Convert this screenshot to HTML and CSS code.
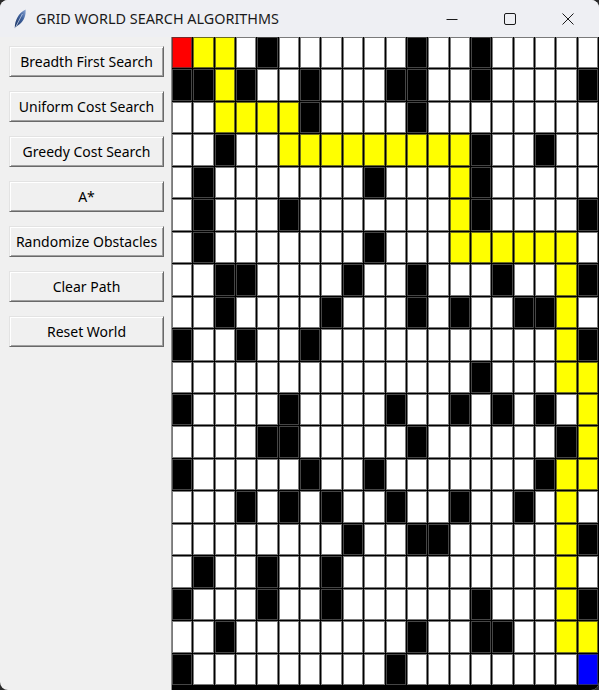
FILE: index.html
```html
<!DOCTYPE html>
<html lang="en">
<head>
<meta charset="utf-8">
<title>GRID WORLD SEARCH ALGORITHMS</title>
<link rel="stylesheet" href="styles.css">
</head>
<body>
<div class="window">
  <header class="titlebar">
    <svg class="feather" viewBox="0 0 12 20" width="12" height="20" aria-hidden="true">
      <defs>
        <linearGradient id="fg" x1="0" y1="1" x2="1" y2="0">
          <stop offset="0" stop-color="#1d3563"/>
          <stop offset="0.6" stop-color="#3f629e"/>
          <stop offset="1" stop-color="#8fa9d6"/>
        </linearGradient>
      </defs>
      <path d="M0.8 19 C0.8 11 4.6 4 11.6 0.4 C12.2 7 9.6 13 3.4 16.8 Z" fill="url(#fg)"/>
      <path d="M0.9 19.6 L8.4 5" stroke="#d6e0f0" stroke-width="0.7" fill="none"/>
    </svg>
    <span class="title">GRID WORLD SEARCH ALGORITHMS</span>
    <div class="caption">
      <span class="cap"><svg width="12" height="12" viewBox="0 0 12 12"><path d="M0.5 6.5 H11.5" stroke="#1a1a1a" stroke-width="1"/></svg></span>
      <span class="cap"><svg width="12" height="12" viewBox="0 0 12 12"><rect x="0.5" y="0.5" width="11" height="11" rx="1.5" fill="none" stroke="#1a1a1a" stroke-width="1"/></svg></span>
      <span class="cap"><svg width="12" height="12" viewBox="0 0 12 12"><path d="M0.5 0.5 L11.5 11.5 M11.5 0.5 L0.5 11.5" stroke="#1a1a1a" stroke-width="1"/></svg></span>
    </div>
  </header>
  <div class="main">
    <aside class="sidebar">
      <button class="btn">Breadth First Search</button>
      <button class="btn">Uniform Cost Search</button>
      <button class="btn">Greedy Cost Search</button>
      <button class="btn">A*</button>
      <button class="btn">Randomize Obstacles</button>
      <button class="btn">Clear Path</button>
      <button class="btn">Reset World</button>
    </aside>
    <div class="grid">
<div class="c s"></div><div class="c y"></div><div class="c y"></div><div class="c"></div><div class="c k"></div><div class="c"></div><div class="c"></div><div class="c"></div><div class="c"></div><div class="c"></div><div class="c"></div><div class="c k"></div><div class="c"></div><div class="c"></div><div class="c k"></div><div class="c"></div><div class="c"></div><div class="c"></div><div class="c"></div><div class="c"></div>
<div class="c k"></div><div class="c k"></div><div class="c y"></div><div class="c k"></div><div class="c"></div><div class="c"></div><div class="c k"></div><div class="c"></div><div class="c"></div><div class="c"></div><div class="c k"></div><div class="c k"></div><div class="c"></div><div class="c"></div><div class="c k"></div><div class="c"></div><div class="c"></div><div class="c"></div><div class="c"></div><div class="c k"></div>
<div class="c"></div><div class="c"></div><div class="c y"></div><div class="c y"></div><div class="c y"></div><div class="c y"></div><div class="c k"></div><div class="c"></div><div class="c"></div><div class="c"></div><div class="c"></div><div class="c k"></div><div class="c"></div><div class="c"></div><div class="c"></div><div class="c"></div><div class="c"></div><div class="c"></div><div class="c"></div><div class="c"></div>
<div class="c"></div><div class="c"></div><div class="c k"></div><div class="c"></div><div class="c"></div><div class="c y"></div><div class="c y"></div><div class="c y"></div><div class="c y"></div><div class="c y"></div><div class="c y"></div><div class="c y"></div><div class="c y"></div><div class="c y"></div><div class="c k"></div><div class="c"></div><div class="c"></div><div class="c k"></div><div class="c"></div><div class="c"></div>
<div class="c"></div><div class="c k"></div><div class="c"></div><div class="c"></div><div class="c"></div><div class="c"></div><div class="c"></div><div class="c"></div><div class="c"></div><div class="c k"></div><div class="c"></div><div class="c"></div><div class="c"></div><div class="c y"></div><div class="c k"></div><div class="c"></div><div class="c"></div><div class="c"></div><div class="c"></div><div class="c"></div>
<div class="c"></div><div class="c k"></div><div class="c"></div><div class="c"></div><div class="c"></div><div class="c k"></div><div class="c"></div><div class="c"></div><div class="c"></div><div class="c"></div><div class="c"></div><div class="c"></div><div class="c"></div><div class="c y"></div><div class="c k"></div><div class="c"></div><div class="c"></div><div class="c"></div><div class="c"></div><div class="c k"></div>
<div class="c"></div><div class="c k"></div><div class="c"></div><div class="c"></div><div class="c"></div><div class="c"></div><div class="c"></div><div class="c"></div><div class="c"></div><div class="c k"></div><div class="c"></div><div class="c"></div><div class="c"></div><div class="c y"></div><div class="c y"></div><div class="c y"></div><div class="c y"></div><div class="c y"></div><div class="c y"></div><div class="c"></div>
<div class="c"></div><div class="c"></div><div class="c k"></div><div class="c k"></div><div class="c"></div><div class="c"></div><div class="c"></div><div class="c"></div><div class="c k"></div><div class="c"></div><div class="c"></div><div class="c k"></div><div class="c"></div><div class="c"></div><div class="c"></div><div class="c k"></div><div class="c"></div><div class="c"></div><div class="c y"></div><div class="c k"></div>
<div class="c"></div><div class="c"></div><div class="c k"></div><div class="c"></div><div class="c"></div><div class="c"></div><div class="c"></div><div class="c k"></div><div class="c"></div><div class="c"></div><div class="c"></div><div class="c k"></div><div class="c"></div><div class="c k"></div><div class="c"></div><div class="c"></div><div class="c k"></div><div class="c k"></div><div class="c y"></div><div class="c"></div>
<div class="c k"></div><div class="c"></div><div class="c"></div><div class="c k"></div><div class="c"></div><div class="c"></div><div class="c k"></div><div class="c"></div><div class="c"></div><div class="c"></div><div class="c"></div><div class="c"></div><div class="c"></div><div class="c"></div><div class="c"></div><div class="c"></div><div class="c"></div><div class="c"></div><div class="c y"></div><div class="c k"></div>
<div class="c"></div><div class="c"></div><div class="c"></div><div class="c"></div><div class="c"></div><div class="c"></div><div class="c"></div><div class="c"></div><div class="c"></div><div class="c"></div><div class="c"></div><div class="c"></div><div class="c"></div><div class="c"></div><div class="c k"></div><div class="c"></div><div class="c"></div><div class="c"></div><div class="c y"></div><div class="c y"></div>
<div class="c k"></div><div class="c"></div><div class="c"></div><div class="c"></div><div class="c"></div><div class="c k"></div><div class="c"></div><div class="c"></div><div class="c"></div><div class="c"></div><div class="c k"></div><div class="c"></div><div class="c"></div><div class="c k"></div><div class="c"></div><div class="c k"></div><div class="c"></div><div class="c k"></div><div class="c"></div><div class="c y"></div>
<div class="c"></div><div class="c"></div><div class="c"></div><div class="c"></div><div class="c k"></div><div class="c k"></div><div class="c"></div><div class="c"></div><div class="c"></div><div class="c"></div><div class="c"></div><div class="c k"></div><div class="c"></div><div class="c"></div><div class="c"></div><div class="c"></div><div class="c"></div><div class="c"></div><div class="c k"></div><div class="c y"></div>
<div class="c k"></div><div class="c"></div><div class="c"></div><div class="c"></div><div class="c"></div><div class="c"></div><div class="c k"></div><div class="c"></div><div class="c"></div><div class="c k"></div><div class="c"></div><div class="c"></div><div class="c"></div><div class="c"></div><div class="c"></div><div class="c"></div><div class="c"></div><div class="c k"></div><div class="c y"></div><div class="c y"></div>
<div class="c"></div><div class="c"></div><div class="c"></div><div class="c k"></div><div class="c"></div><div class="c k"></div><div class="c"></div><div class="c k"></div><div class="c"></div><div class="c"></div><div class="c k"></div><div class="c"></div><div class="c"></div><div class="c k"></div><div class="c"></div><div class="c"></div><div class="c k"></div><div class="c"></div><div class="c y"></div><div class="c"></div>
<div class="c"></div><div class="c"></div><div class="c"></div><div class="c"></div><div class="c"></div><div class="c"></div><div class="c"></div><div class="c"></div><div class="c k"></div><div class="c"></div><div class="c"></div><div class="c k"></div><div class="c k"></div><div class="c"></div><div class="c"></div><div class="c"></div><div class="c"></div><div class="c"></div><div class="c y"></div><div class="c k"></div>
<div class="c"></div><div class="c k"></div><div class="c"></div><div class="c"></div><div class="c k"></div><div class="c"></div><div class="c"></div><div class="c k"></div><div class="c"></div><div class="c"></div><div class="c"></div><div class="c"></div><div class="c"></div><div class="c"></div><div class="c"></div><div class="c"></div><div class="c"></div><div class="c"></div><div class="c y"></div><div class="c"></div>
<div class="c k"></div><div class="c"></div><div class="c"></div><div class="c"></div><div class="c k"></div><div class="c"></div><div class="c"></div><div class="c k"></div><div class="c"></div><div class="c"></div><div class="c"></div><div class="c"></div><div class="c"></div><div class="c"></div><div class="c k"></div><div class="c"></div><div class="c"></div><div class="c"></div><div class="c y"></div><div class="c k"></div>
<div class="c"></div><div class="c"></div><div class="c k"></div><div class="c"></div><div class="c"></div><div class="c"></div><div class="c"></div><div class="c"></div><div class="c"></div><div class="c"></div><div class="c"></div><div class="c k"></div><div class="c"></div><div class="c"></div><div class="c k"></div><div class="c k"></div><div class="c"></div><div class="c"></div><div class="c y"></div><div class="c y"></div>
<div class="c k"></div><div class="c"></div><div class="c"></div><div class="c"></div><div class="c"></div><div class="c"></div><div class="c"></div><div class="c"></div><div class="c"></div><div class="c"></div><div class="c k"></div><div class="c"></div><div class="c"></div><div class="c"></div><div class="c"></div><div class="c"></div><div class="c"></div><div class="c"></div><div class="c"></div><div class="c g"></div>
    </div>
  </div>
</div>
</body>
</html>
```
FILE: styles.css
```css
html, body {
  margin: 0;
  padding: 0;
}

body {
  width: 599px;
  height: 690px;
  overflow: hidden;
  background: #2a2a2a;
}

.window {
  width: 599px;
  height: 690px;
  border-radius: 8px;
  overflow: hidden;
  background: #f0f0f0;
  display: flex;
  flex-direction: column;
}

.titlebar {
  height: 37px;
  flex: none;
  background: #eeeff3;
  display: flex;
  align-items: center;
}

.feather {
  flex: none;
  margin-left: 14px;
  margin-right: 10px;
}

.title {
  flex: 1;
  font-family: "Noto Sans", sans-serif;
  font-size: 14.4px;
  color: #1a1a1a;
  white-space: nowrap;
}

.caption {
  display: flex;
  align-self: stretch;
  padding-right: 2px;
}

.cap {
  width: 58px;
  display: flex;
  align-items: center;
  justify-content: center;
}

.main {
  flex: 1;
  display: flex;
  min-height: 0;
}

.sidebar {
  width: 171px;
  flex: none;
  box-sizing: border-box;
  padding: 9px 0 0 9px;
  display: flex;
  flex-direction: column;
  align-items: flex-start;
  gap: 14px;
}

.btn {
  box-sizing: border-box;
  width: 155px;
  height: 31px;
  margin: 0;
  padding: 0;
  background: #f0f0f0;
  color: #000;
  font-family: "Noto Sans", sans-serif;
  font-size: 14px;
  border: 1px solid;
  border-color: #e3e3e3 #696969 #696969 #e3e3e3;
  box-shadow: inset 1px 1px #ffffff, inset -1px -1px #a0a0a0;
}

.grid {
  flex: 1;
  display: grid;
  grid-template-columns: repeat(20, 1fr);
  grid-template-rows: repeat(20, 1fr);
  gap: 1px;
  padding: 0 1px 5px 0;
  background: #000;
  border-left: 1px solid #8c8c8c;
}

.c {
  background: #fff;
  border: 1px solid #7a7a7a;
}

.k {
  background: #000;
  border-color: #454545;
}

.y {
  background: #ffff00;
  border-color: #6e6e1e;
}

.s {
  background: #ff0000;
  border-color: #7a2a2a;
}

.g {
  background: #0000ff;
  border-color: #2a2a7a;
}
```
